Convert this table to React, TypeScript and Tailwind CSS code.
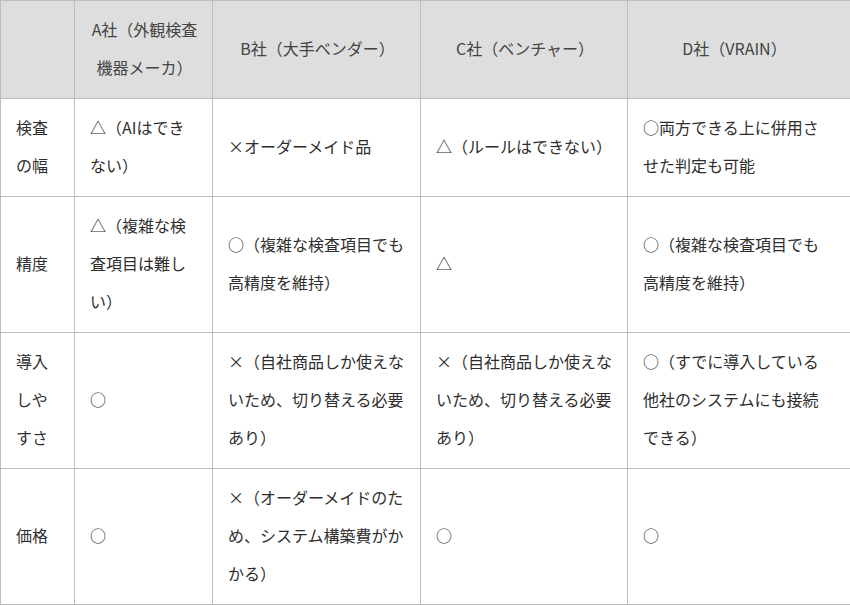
import React from "react";

const headers = ["", "A社（外観検査機器メーカ）", "B社（大手ベンダー）", "C社（ベンチャー）", "D社（VRAIN）"];
const rows: string[][] = [
  ["検査の幅", "△（AIはできない）", "×オーダーメイド品", "△（ルールはできない）", "○両方できる上に併用させた判定も可能"],
  ["精度", "△（複雑な検査項目は難しい）", "○（複雑な検査項目でも高精度を維持）", "△", "○（複雑な検査項目でも高精度を維持）"],
  ["導入しやすさ", "○", "×（自社商品しか使えないため、切り替える必要あり）", "×（自社商品しか使えないため、切り替える必要あり）", "○（すでに導入している他社のシステムにも接続できる）"],
  ["価格", "○", "×（オーダーメイドのため、システム構築費がかかる）", "○", "○"],
];

export default function App() {
  return (
    <div
      className="bg-white text-[#2e2e2e] text-[16px] leading-[38px]"
      style={{ fontFamily: '"Noto Sans CJK JP", "Noto Sans", sans-serif' }}
    >
      <table className="table-fixed border-collapse w-[850px]">
        <colgroup>
          <col className="w-[74px]" />
          <col className="w-[138px]" />
          <col className="w-[208px]" />
          <col className="w-[207px]" />
          <col className="w-[223px]" />
        </colgroup>
        <thead>
          <tr>
            {headers.map((h, i) => (
              <th
                key={i}
                className={
                  i === 4
                    ? "border border-[#bdbdbd] bg-[#dedede] font-normal text-center align-middle pl-[15px] pr-[24px] pt-[9px] pb-[12px] text-[#444]"
                    : "border border-[#bdbdbd] bg-[#dedede] font-normal text-center align-middle pl-[15px] pr-[13px] pt-[9px] pb-[12px] text-[#444]"
                }
              >
                {h}
              </th>
            ))}
          </tr>
        </thead>
        <tbody>
          {rows.map((r, ri) => (
            <tr key={ri}>
              {r.map((c, ci) => (
                <td
                  key={ci}
                  className={
                    ci === 4
                      ? "border border-[#bdbdbd] text-left align-middle pl-[15px] pr-[24px] pt-[8.5px] pb-[12.5px] break-all"
                      : "border border-[#bdbdbd] text-left align-middle pl-[15px] pr-[13px] pt-[8.5px] pb-[12.5px] break-all"
                  }
                >
                  {c}
                </td>
              ))}
            </tr>
          ))}
        </tbody>
      </table>
    </div>
  );
}
